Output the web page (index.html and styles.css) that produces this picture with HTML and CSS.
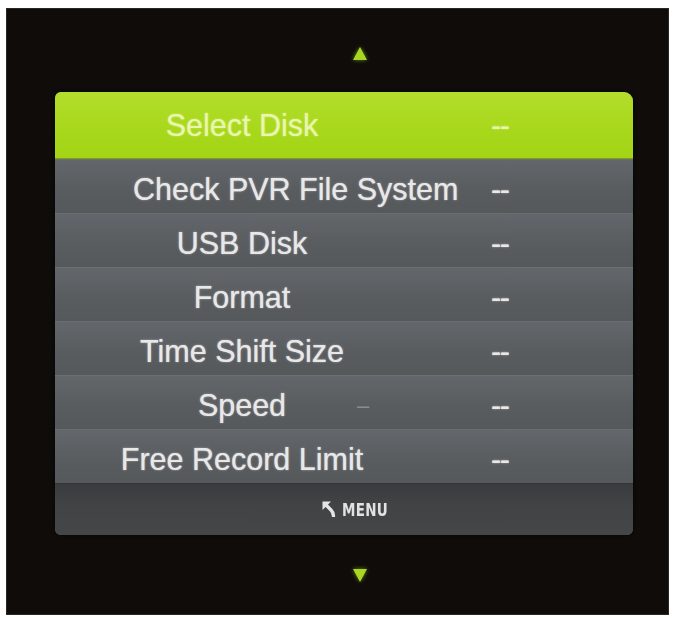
FILE: index.html
```html
<!DOCTYPE html>
<html lang="en">
<head>
<meta charset="utf-8">
<title>PVR File System</title>
<link rel="stylesheet" href="styles.css">
</head>
<body>
<div class="screen">
  <div class="arrow arrow-up"></div>
  <div class="panel">
    <div class="row row-active">
      <span class="label">Select Disk</span>
      <span class="value">--</span>
    </div>
    <div class="row">
      <span class="label label-wide">Check PVR File System</span>
      <span class="value">--</span>
    </div>
    <div class="row">
      <span class="label">USB Disk</span>
      <span class="value">--</span>
    </div>
    <div class="row">
      <span class="label">Format</span>
      <span class="value">--</span>
    </div>
    <div class="row">
      <span class="label">Time Shift Size</span>
      <span class="value">--</span>
    </div>
    <div class="row">
      <span class="label">Speed</span>
      <span class="ghost">–</span>
      <span class="value">--</span>
    </div>
    <div class="row">
      <span class="label">Free Record Limit</span>
      <span class="value">--</span>
    </div>
    <div class="footer">
      <svg class="back-icon" width="15" height="16" viewBox="0 0 15 16">
        <path d="M0.5 0.5 H9 L0.5 9 Z" fill="#e4e4e4"/>
        <path d="M3.5 3.5 L9 9 Q11.5 11.5 11.5 15" stroke="#e4e4e4" stroke-width="3.4" fill="none" stroke-linecap="round"/>
      </svg>
      <span class="menu">MENU</span>
    </div>
  </div>
  <div class="arrow arrow-down"></div>
</div>
</body>
</html>
```

FILE: styles.css
```css
html, body {
  margin: 0;
  padding: 0;
  background: #ffffff;
}

body {
  font-family: "Liberation Sans", Arial, sans-serif;
}

.screen {
  margin: 8px 5px 3px 6px;
  width: 663px;
  height: 607px;
  box-sizing: border-box;
  background: #0f0c0a;
  border: 1px solid #2a2826;
  padding-top: 38px;
  display: flex;
  flex-direction: column;
}

.arrow {
  width: 0;
  height: 0;
  border-left: 7px solid transparent;
  border-right: 7px solid transparent;
  margin-left: 346px;
  filter: drop-shadow(0 0 2px rgba(170, 220, 40, 0.6));
}

.arrow-up {
  border-bottom: 13px solid #a8d623;
}

.arrow-down {
  border-top: 13px solid #a8d623;
  margin-top: 34px;
}

.panel {
  margin-top: 32px;
  margin-left: 48px;
  width: 578px;
  border-radius: 6px 9px 6px 6px;
  overflow: hidden;
  background: #5b5e61;
  box-shadow: 0 0 4px rgba(0, 0, 0, 0.6);
}

.row {
  height: 54px;
  display: grid;
  grid-template-columns: 374px 1fr;
  align-items: center;
  color: #e8e8e8;
  font-size: 30.5px;
  background: linear-gradient(#63666a, #595c5f 60%, #56595c);
  border-top: 1px solid #6b6e71;
  box-sizing: border-box;
  padding-top: 6px;
  white-space: nowrap;
  text-shadow: 0 0 1px rgba(255, 255, 255, 0.6), 0 0 3px rgba(255, 255, 255, 0.25);
}

.row-active {
  height: 67px;
  border-top: none;
  padding-top: 0;
  background: linear-gradient(#b3de2c, #a8d81c 55%, #a3d414);
  color: #e9f6ad;
  text-shadow: 0 0 2px rgba(255, 255, 210, 0.5);
  border-bottom: 1px solid #7f9c1c;
}

.label {
  grid-row: 1;
  grid-column: 1;
  text-align: center;
}

.label-wide {
  text-align: left;
  padding-left: 78px;
}

.ghost {
  grid-row: 1;
  grid-column: 1;
  justify-self: start;
  margin-left: 302px;
  color: #8a8d90;
  font-size: 22px;
  text-shadow: none;
}

.value {
  grid-row: 1;
  grid-column: 2;
  padding-left: 62px;
  letter-spacing: -1.5px;
}

.footer {
  height: 52px;
  background: linear-gradient(#3a3b3d, #424345 40%, #454648);
  border-top: 1px solid #333436;
  box-sizing: border-box;
  display: flex;
  align-items: center;
  padding-left: 267px;
  gap: 5px;
}

.back-icon {
  display: block;
  margin-top: -2px;
}

.menu {
  font-family: "DejaVu Sans Condensed", "DejaVu Sans", sans-serif;
  font-weight: bold;
  font-size: 15px;
  letter-spacing: 0.3px;
  color: #e2e2e2;
  transform: scaleY(1.15);
}
```
